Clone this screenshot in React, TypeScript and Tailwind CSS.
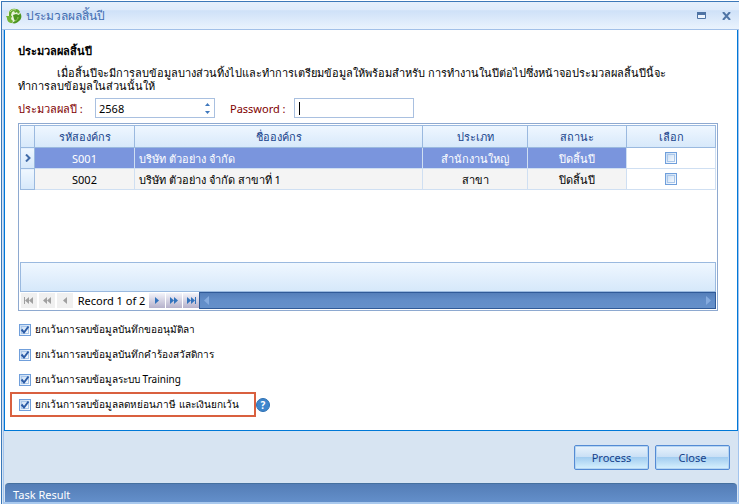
import cn from 'clsx'
import { ReactNode, useState } from 'react'

interface Organization {
  code: string
  name: string
  type: string
  status: string
}

const organizations: Organization[] = [
  { code: 'S001', name: 'บริษัท ตัวอย่าง จำกัด', type: 'สำนักงานใหญ่', status: 'ปิดสิ้นปี' },
  { code: 'S002', name: 'บริษัท ตัวอย่าง จำกัด สาขาที่ 1', type: 'สาขา', status: 'ปิดสิ้นปี' },
]

const options = [
  { id: 'leave', text: 'ยกเว้นการลบข้อมูลบันทึกขออนุมัติลา' },
  { id: 'welfare', text: 'ยกเว้นการลบข้อมูลบันทึกคำร้องสวัสดิการ' },
  { id: 'training', text: 'ยกเว้นการลบข้อมูลระบบ Training' },
  { id: 'tax', text: 'ยกเว้นการลบข้อมูลลดหย่อนภาษี และเงินยกเว้น', help: true },
]

const LogoIcon = () => (
  <svg className="size-4" viewBox="0 0 16 16" aria-hidden="true">
    <circle cx="8" cy="8" r="7" fill="#e9f2dc" />
    <path d="M3 5C3 2 6 0 10 1c2 0 3 1 4 3l-2 2-1-2-2 1-1-2-2 1-1 3 1 2H3z" fill="#5fa52b" />
    <path d="M7 7l3-1 3 1 1-2c2 2 2 6-1 8-2 2-4 3-7 2l3-2-1-2z" fill="#4c9420" />
    <path d="M0 8l6 0-1 3 2 2-1 2C3 15 1 13 1 10z" fill="#72b434" />
    <path d="M4 4c1-2 3-3 6-2" stroke="#bfe08e" fill="none" />
    <path d="M12 9c0 2-1 3-3 4" stroke="#97cc5c" fill="none" />
  </svg>
)

const NavButton = ({ label, disabled, children }: { label: string; disabled?: boolean; children: ReactNode }) => (
  <button
    aria-label={label}
    disabled={disabled}
    className={cn('flex h-[15px] w-4 shrink-0 items-center justify-center', {
      'bg-[#f0f0f0] text-[#a0a0a0]': disabled,
      'bg-gradient-to-b from-[#f4f4fa] to-[#b5b1cb] text-[#3273bd]': !disabled,
    })}
  >
    <svg className="h-[9px] w-3" viewBox="0 0 12 9" fill="currentColor" aria-hidden="true">
      {children}
    </svg>
  </button>
)

const CheckBox = ({ id, label, defaultChecked }: { id: string; label?: string; defaultChecked?: boolean }) => (
  <span className="relative block size-3 shrink-0">
    <input
      id={id}
      type="checkbox"
      aria-label={label}
      defaultChecked={defaultChecked}
      className="peer block size-3 appearance-none border border-[#709fdb] bg-gradient-to-br from-[#c3d9f2] to-white outline outline-1 -outline-offset-3 outline-[#a9c7eb]"
    />
    <svg
      className="pointer-events-none absolute inset-0 hidden size-3 peer-checked:block"
      viewBox="0 0 12 12"
      fill="none"
      stroke="#2c5ca6"
      strokeWidth="2"
      aria-hidden="true"
    >
      <path d="M2.5 5.5l2.5 3 4.5-6" />
    </svg>
  </span>
)

const Grid = () => (
  <div className="mt-[5px] flex flex-col border border-[#8ea9d0] p-px">
    <div className="h-[137px]">
      <table className="w-full table-fixed border-collapse text-center">
        <colgroup>
          <col className="w-[14px]" />
          <col className="w-[100px]" />
          <col />
          <col className="w-[105px]" />
          <col className="w-[99px]" />
          <col className="w-[89px]" />
        </colgroup>
        <thead>
          <tr className="h-[22px] bg-gradient-to-b from-[#eff7ff] to-[#d6e8fa] text-[#16428b]">
            {['', 'รหัสองค์กร', 'ชื่อองค์กร', 'ประเภท', 'สถานะ', 'เลือก'].map((title) => (
              <th key={title} className="border border-[#9ab9df] p-0 font-normal">
                {title}
              </th>
            ))}
          </tr>
        </thead>
        <tbody>
          {organizations.map(({ code, name, type, status }, index) => (
            <tr
              key={code}
              className={cn('h-[21px]', {
                'bg-[#7a95dd] text-white': index === 0,
                'bg-[#f4f4f4] text-black': index !== 0,
              })}
            >
              <td className="border border-[#9ab9df] bg-gradient-to-b from-[#eff7ff] to-[#d6e8fa] p-0">
                {index === 0 && (
                  <svg className="mx-auto size-2" viewBox="0 0 8 8" fill="none" stroke="#426ca8" strokeWidth="2" aria-hidden="true">
                    <path d="M2 0.5L5.5 4 2 7.5" />
                  </svg>
                )}
              </td>
              <td className="border border-[#cfdff2] p-0">{code}</td>
              <td className="border border-[#cfdff2] px-1 py-0 text-left">{name}</td>
              <td className="border border-[#cfdff2] p-0">{type}</td>
              <td className="border border-[#cfdff2] p-0">{status}</td>
              <td className="border border-[#cfdff2] bg-white p-0">
                <div className="flex justify-center">
                  <CheckBox id={`select-${code}`} label={`เลือก ${code}`} />
                </div>
              </td>
            </tr>
          ))}
        </tbody>
      </table>
    </div>
    <div className="h-[30px] border border-[#9ab9df] bg-gradient-to-b from-[#eff7ff] to-[#d6e8fa]" />
    <div className="flex h-[17px] items-center">
      <div className="flex gap-[2px] px-px">
        <NavButton label="First" disabled>
          <path d="M1 1h1v7H1zM6 1v7L2 4.500zM10 1v7L6 4.500z" />
        </NavButton>
        <NavButton label="Previous page" disabled>
          <path d="M6 1v7L2 4.500zM10 1v7L6 4.500z" />
        </NavButton>
        <NavButton label="Previous" disabled>
          <path d="M8 1v7L4 4.500z" />
        </NavButton>
      </div>
      <span className="w-[75px] text-center whitespace-nowrap">Record 1 of 2</span>
      <div className="flex gap-px">
        <NavButton label="Next">
          <path d="M4 1v7l4-3.500z" />
        </NavButton>
        <NavButton label="Next page">
          <path d="M2 1v7l4-3.500zM6 1v7l4-3.500z" />
        </NavButton>
        <NavButton label="Last">
          <path d="M2 1v7l4-3.500zM6 1v7l4-3.500zM10 1h1v7h-1z" />
        </NavButton>
      </div>
      <div className="flex h-[17px] grow items-center justify-between border border-[#305a98] bg-gradient-to-b from-[#557fba] via-[#628dc8] to-[#6590ca] px-1 text-[#86abde]">
        <svg className="h-[9px] w-[5px]" viewBox="0 0 5 9" fill="currentColor" aria-hidden="true">
          <path d="M5 0v9L0 4.500z" />
        </svg>
        <svg className="h-[9px] w-[5px]" viewBox="0 0 5 9" fill="currentColor" aria-hidden="true">
          <path d="M0 0v9l5-4.500z" />
        </svg>
      </div>
    </div>
  </div>
)

const ActionButton = ({ text }: { text: string }) => (
  <button className="h-[25px] w-[75px] rounded-xs border border-[#548bd4] bg-[linear-gradient(#e9f3fc_0%,#c9dff5_48%,#a3cdf0_50%,#d8f2fe_100%)] text-[#16428b] inset-ring inset-ring-[#b5d5f3]">
    {text}
  </button>
)

export default function App() {
  const [year, setYear] = useState(2568)

  return (
    <div className="flex min-h-screen flex-col bg-white pt-px pl-px font-['Noto_Sans','Open_Sans',sans-serif] text-[11px] leading-[13px] text-black">
      <div className="flex grow flex-col border-t border-l border-[#3b78b8] bg-[#d7e4f2]">
        <header className="flex h-7 items-center justify-between border-b border-[#a2c0e8] bg-[linear-gradient(#e5f0fc_0%,#deebfb_30%,#cfe1f8_32%,#eaf3fd_100%)] pr-2 pl-1">
          <div className="flex items-center gap-1">
            <LogoIcon />
            <h1 className="text-xs text-[#3f6cb0]">ประมวลผลสิ้นปี</h1>
          </div>
          <div className="flex items-center gap-4 text-[#4f74a5]">
            <button aria-label="Maximize">
              <svg className="h-[7px] w-[9px]" viewBox="0 0 9 7" aria-hidden="true">
                <path d="M0.500 0.500h8v6h-8z" fill="#edf4fd" stroke="currentColor" />
                <path d="M0 0h9v3H0z" fill="currentColor" />
              </svg>
            </button>
            <button aria-label="Close window">
              <svg className="h-2 w-[9px]" viewBox="0 0 9 8" fill="none" stroke="currentColor" strokeWidth="2" aria-hidden="true">
                <path d="M1 0l7 8M8 0L1 8" />
              </svg>
            </button>
          </div>
        </header>

        <div className="ml-px flex grow flex-col border-x border-[#a2c4ee]">
          <main className="border border-t-0 border-[#0078d7] bg-white pt-[14px] pr-[19px] pb-[13px] pl-[13px]">
            <h2 className="font-bold">ประมวลผลสิ้นปี</h2>
            <p className="mt-[9px] indent-[39px]">
              เมื่อสิ้นปีจะมีการลบข้อมูลบางส่วนทิ้งไปและทำการเตรียมข้อมูลให้พร้อมสำหรับ การทำงานในปีต่อไปซึ่งหน้าจอประมวลผลสิ้นปีนี้จะ
              <br />
              ทำการลบข้อมูลในส่วนนั้นให้
            </p>

            <div className="mt-[6px] flex h-5 items-center text-[#800000]">
              <label htmlFor="year" className="w-[77px]">
                ประมวลผลปี :
              </label>
              <div className="flex h-5 w-[120px] items-center justify-between border border-[#a9c0e0] pr-1 pl-[3px]">
                <input
                  id="year"
                  value={year}
                  onChange={(e) => setYear(Number(e.target.value) || 0)}
                  className="w-20 text-black outline-none"
                />
                <div className="flex flex-col gap-[5px] text-[#3f78bd]">
                  <button aria-label="Increase" onClick={() => setYear(year + 1)}>
                    <svg className="h-[3px] w-[5px]" viewBox="0 0 5 3" fill="currentColor" aria-hidden="true">
                      <path d="M0 3h5L2.500 0z" />
                    </svg>
                  </button>
                  <button aria-label="Decrease" onClick={() => setYear(year - 1)}>
                    <svg className="h-[3px] w-[5px]" viewBox="0 0 5 3" fill="currentColor" aria-hidden="true">
                      <path d="M0 0h5L2.500 3z" />
                    </svg>
                  </button>
                </div>
              </div>
              <label htmlFor="password" className="ml-[15px] w-16">
                Password :
              </label>
              <div className="flex h-5 w-[120px] items-center border border-[#a9c0e0] pl-1">
                <span className="h-[13px] w-px shrink-0 bg-black" />
                <input id="password" type="password" className="w-full text-black outline-none" />
              </div>
            </div>

            <Grid />

            <div className="mt-[6px] flex flex-col items-start">
              {options.map(({ id, text, help }) => (
                <div key={id} className="-ml-2 flex items-center">
                  <div
                    className={cn('flex h-[25px] items-center gap-1 border-2 px-[7px]', {
                      'w-[246px] border-[#d9603f]': help,
                      'border-transparent': !help,
                    })}
                  >
                    <CheckBox id={id} defaultChecked />
                    <label htmlFor={id} className="text-[10px] whitespace-nowrap">
                      {text}
                    </label>
                  </div>
                  {help && (
                    <button
                      aria-label="Help"
                      className="size-[14px] rounded-full border border-[#2d70b3] bg-[#3e86cc] text-[10px] leading-3 font-bold text-white"
                    >
                      ?
                    </button>
                  )}
                </div>
              ))}
            </div>
          </main>

          <div className="flex justify-end gap-[6px] pt-[14px] pr-2 pb-[13px]">
            <ActionButton text="Process" />
            <ActionButton text="Close" />
          </div>

          <footer className="mx-px grow rounded-t-sm border-t border-[#45709f] bg-gradient-to-b from-[#547db6] to-[#638fca] px-2 pt-1 text-white">
            Task Result
          </footer>
          <div className="h-[2px] bg-[#a9c9ee]" />
        </div>
      </div>
    </div>
  )
}
